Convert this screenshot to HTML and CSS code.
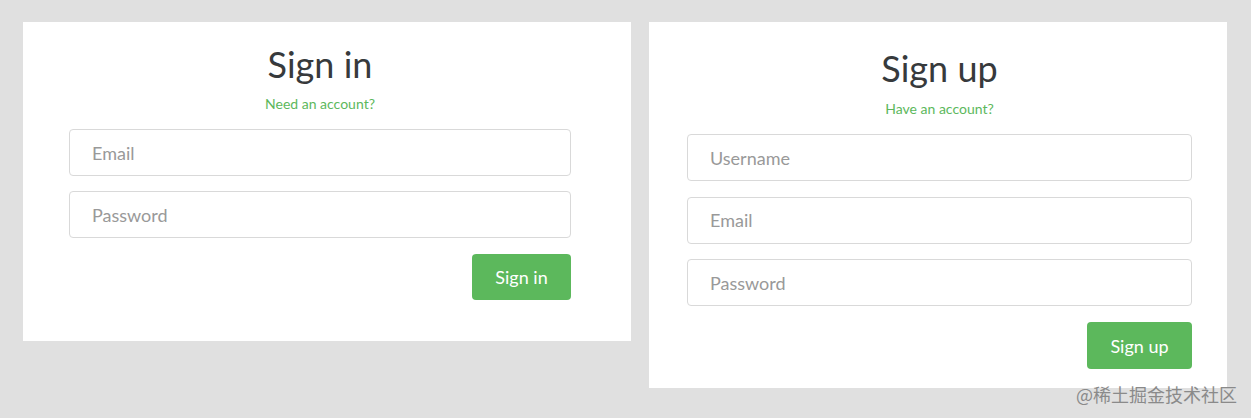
FILE: index.html
```html
<!DOCTYPE html>
<html>
<head>
<meta charset="utf-8">
<link rel="stylesheet" href="styles.css">
</head>
<body>
<div class="page">
  <div class="card card-signin">
    <h1 class="title">Sign in</h1>
    <p class="switch"><a href="#">Need an account?</a></p>
    <form class="form">
      <input class="field" type="text" placeholder="Email">
      <input class="field" type="password" placeholder="Password">
      <div class="actions"><button class="btn btn-signin" type="button">Sign in</button></div>
    </form>
  </div>
  <div class="card card-signup">
    <h1 class="title">Sign up</h1>
    <p class="switch"><a href="#">Have an account?</a></p>
    <form class="form form-signup">
      <input class="field" type="text" placeholder="Username">
      <input class="field" type="text" placeholder="Email">
      <input class="field" type="password" placeholder="Password">
      <div class="actions"><button class="btn btn-signup" type="button">Sign up</button></div>
    </form>
  </div>
</div>
<div class="watermark">@稀土掘金技术社区</div>
</body>
</html>
```

FILE: styles.css
```css
html, body {
  margin: 0;
  padding: 0;
  background: #e0e0e0;
  height: 418px;
  overflow: hidden;
  font-family: "Lato", "Liberation Sans", sans-serif;
}
.page {
  display: flex;
  align-items: flex-start;
  gap: 18px;
  padding: 22px 0 0 23px;
}
.card {
  background: #fff;
  box-sizing: border-box;
}
.card-signin {
  width: 608px;
  padding: 20px 60px 41px 46px;
}
.card-signup {
  width: 578px;
  padding: 24px 35px 19px 38px;
}
.title {
  margin: 0;
  text-align: center;
  font-size: 36px;
  line-height: 44px;
  font-weight: 400;
  color: #373a3c;
}
.switch {
  margin: 8px 0 0;
  text-align: center;
  font-size: 14px;
  line-height: 20px;
}
.card-signup .switch {
  margin-top: 9px;
}
.switch a {
  color: #5cb85c;
  text-decoration: none;
}
.form {
  display: flex;
  flex-direction: column;
  gap: 15px;
  margin-top: 15px;
}
.form-signup {
  gap: 15.5px;
}
.field {
  box-sizing: border-box;
  height: 47px;
  width: 100%;
  border: 1px solid #d9d9d9;
  border-radius: 4px;
  padding: 0 22px;
  font-family: inherit;
  font-size: 18px;
  color: #55595c;
  outline: none;
}
.field::placeholder {
  color: #999;
}
.actions {
  display: flex;
  justify-content: flex-end;
  margin-top: 1px;
}
.form-signup .actions {
  margin-top: 0.5px;
}
.btn {
  background: #5cb85c;
  color: #fff;
  border: none;
  border-radius: 4px;
  font-family: inherit;
  font-size: 18px;
  cursor: pointer;
}
.btn-signin {
  width: 99px;
  height: 46px;
}
.btn-signup {
  width: 105px;
  height: 47px;
}
.watermark {
  position: absolute;
  right: 14px;
  bottom: 14px;
  font-family: "Noto Sans CJK SC", sans-serif;
  font-size: 18px;
  line-height: 20px;
  color: #8a8a8a;
}
```
